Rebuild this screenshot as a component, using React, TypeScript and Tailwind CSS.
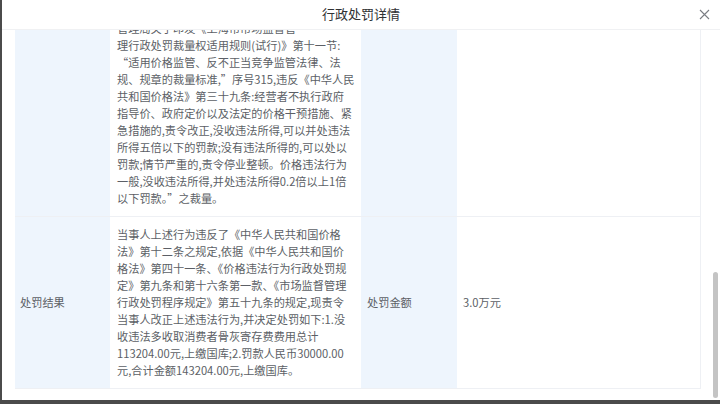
import React from "react";

const row1Lines = [
  "管理局关于印发《上海市市场监督管",
  "理行政处罚裁量权适用规则(试行)》第十一节:",
  "\u201C适用价格监管、反不正当竞争监管法律、法",
  "规、规章的裁量标准,\u201D序号315,违反《中华人民",
  "共和国价格法》第三十九条:经营者不执行政府",
  "指导价、政府定价以及法定的价格干预措施、紧",
  "急措施的,责令改正,没收违法所得,可以并处违法",
  "所得五倍以下的罚款;没有违法所得的,可以处以",
  "罚款;情节严重的,责令停业整顿。价格违法行为",
  "一般,没收违法所得,并处违法所得0.2倍以上1倍",
  "以下罚款。\u201D之裁量。",
];

const row2Lines = [
  "当事人上述行为违反了《中华人民共和国价格",
  "法》第十二条之规定,依据《中华人民共和国价",
  "格法》第四十一条、《价格违法行为行政处罚规",
  "定》第九条和第十六条第一款、《市场监督管理",
  "行政处罚程序规定》第五十九条的规定,现责令",
  "当事人改正上述违法行为,并决定处罚如下:1.没",
  "收违法多收取消费者骨灰寄存费费用总计",
  "113204.00元,上缴国库;2.罚款人民币30000.00",
  "元,合计金额143204.00元,上缴国库。",
];

const font = {
  fontFamily: '"Microsoft YaHei", "Noto Sans CJK SC", "Noto Sans", sans-serif',
};

function Lines({ lines }: { lines: string[] }) {
  return (
    <>
      {lines.map((l, i) => (
        <div key={i} className="whitespace-nowrap h-[17px]">
          {l}
        </div>
      ))}
    </>
  );
}

export default function App() {
  return (
    <div
      className="w-[720px] h-[404px] bg-[#4b4b4b] overflow-hidden"
      style={font}
    >
      <div className="ml-[2px] h-[400px] bg-white flex flex-col relative">
        {/* header */}
        <div className="h-[30px] shrink-0 border-b border-[#f0f1f3] flex items-center justify-center relative">
          <span className="text-[13px] text-[#303133] leading-none -mt-[2px]">
            行政处罚详情
          </span>
          <svg
            className="absolute right-[10px] top-[9px]"
            width="11"
            height="11"
            viewBox="0 0 11 11"
          >
            <path
              d="M1 1 L10 10 M10 1 L1 10"
              stroke="#7a7d83"
              strokeWidth="1.1"
              fill="none"
            />
          </svg>
        </div>

        {/* body (scrolled) */}
        <div className="flex-1 overflow-hidden relative">
          <div className="pl-[13px] pr-[18px] -mt-[10px]">
            <div className="w-[686px] border-r border-[#eef0f4] text-[11.2px] leading-[17px] text-[#5c5f66]">
              {/* row 1 (upper part scrolled out of view) */}
              <div className="grid grid-cols-[95px_251px_96px_244px] border-b border-[#eef0f4]">
                <div className="bg-[#eef5fd]" />
                <div className="pl-[7px] pb-[9px]">
                  <Lines lines={row1Lines} />
                </div>
                <div className="bg-[#eef5fd]" />
                <div />
              </div>
              {/* row 2 */}
              <div className="grid grid-cols-[95px_251px_96px_244px] border-b border-[#eef0f4]">
                <div className="bg-[#eef5fd] flex items-center pl-[5px]">
                  处罚结果
                </div>
                <div className="pl-[7px] pt-[9px] pb-[9px]">
                  <Lines lines={row2Lines} />
                </div>
                <div className="bg-[#eef5fd] flex items-center pl-[6px]">
                  处罚金额
                </div>
                <div className="flex items-center pl-[6px]">3.0万元</div>
              </div>
            </div>
          </div>
          {/* scrollbar thumb */}
          <div className="absolute right-[2px] top-[242px] w-[5px] h-[126px] rounded-[3px] bg-[#c4c4c4]" />
        </div>
      </div>
    </div>
  );
}
